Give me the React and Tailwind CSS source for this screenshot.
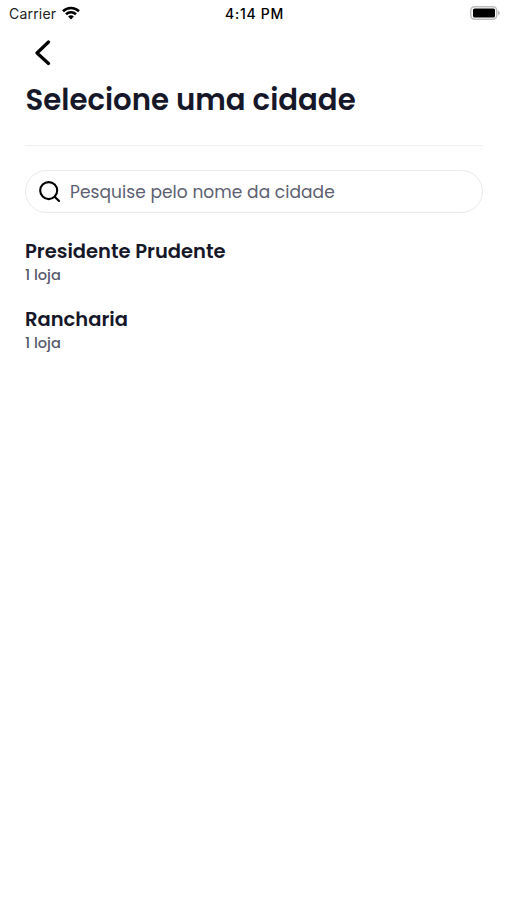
import React from "react";

const cities = [
  { name: "Presidente Prudente", stores: "1 loja" },
  { name: "Rancharia", stores: "1 loja" },
];

function StatusBar() {
  return (
    <div className="grid grid-cols-3 items-center h-7 pl-[9px] pr-[7px] font-['Inter','Liberation_Sans',sans-serif] text-sm text-black">
      <div className="flex items-center gap-1.5 text-[#222]">
        <span className="tracking-[0.2px]">Carrier</span>
        <svg className="w-[18px] h-[14px] -translate-y-px text-black" viewBox="0 0 18 14" fill="none" stroke="currentColor" strokeWidth="2.6">
          <path d="M1 5.2a11.6 11.6 0 0 1 16 0" />
          <path d="M4 8.300a7.200 7.200 0 0 1 10 0" />
          <path d="M9 13.6 6.1 10.6a4.2 4.2 0 0 1 5.8 0z" fill="currentColor" stroke="none" />
        </svg>
      </div>
      <span className="text-center font-medium tracking-[0.7px] whitespace-nowrap">4:14 PM</span>
      <svg className="justify-self-end w-[30px] h-[14px] -translate-y-px" viewBox="0 0 30 14" fill="none">
        <rect x="0.75" y="0.75" width="26" height="12.500" rx="3.8" stroke="#bdbdbd" strokeWidth="1.5" />
        <rect x="3" y="2.500" width="22" height="9" rx="1.5" fill="#000" />
        <path d="M28 4.500v5c1.200-.5 1.800-1.400 1.800-2.500S29.200 5 28 4.500z" fill="#bdbdbd" />
      </svg>
    </div>
  );
}

function App() {
  return (
    <div className="min-h-screen bg-white font-['Poppins','Open_Sans',sans-serif] text-[#16182a]">
      <StatusBar />
      <main className="pl-[25px] pr-6">
        <button type="button" aria-label="Voltar" className="flex items-center h-[50px] pl-[9px] text-black">
          <svg className="w-[18px] h-[26px]" viewBox="0 0 18 26" fill="none" stroke="currentColor" strokeWidth="3.2" strokeLinecap="round" strokeLinejoin="round">
            <path d="M14.500 2 3 13l11.500 10.500" />
          </svg>
        </button>
        <h1 className="h-[44px] leading-[44px] text-[29.2px] font-semibold whitespace-nowrap pl-[0.5px]">
          Selecione uma cidade
        </h1>
        <hr className="mt-[23px] border-t border-[#eff0f2]" />
        <div className="flex items-center gap-[9px] h-[43px] mt-6 pl-[13px] rounded-full border border-[#e8eaed]">
          <svg className="w-[22px] h-[23px] text-black" viewBox="0 0 22 23" fill="none" stroke="currentColor" strokeWidth="2.1" strokeLinecap="round">
            <circle cx="9.700" cy="10.600" r="8.500" />
            <path d="m16 17 4 4" />
          </svg>
          <input
            type="text"
            placeholder="Pesquise pelo nome da cidade"
            className="flex-1 pt-0.5 text-[17px] tracking-[0.07px] placeholder:text-[#5c6072] outline-none"
          />
        </div>
        <ul className="mt-[25px] space-y-[18px]">
          {cities.map((city) => (
            <li key={city.name} className="h-[50px]">
              <h2 className="h-[27px] leading-[27px] text-[19.5px] font-semibold">{city.name}</h2>
              <p className="h-[21px] leading-[21px] text-[14.6px] font-medium text-[#565a6c]">{city.stores}</p>
            </li>
          ))}
        </ul>
      </main>
    </div>
  );
}

export default App;
